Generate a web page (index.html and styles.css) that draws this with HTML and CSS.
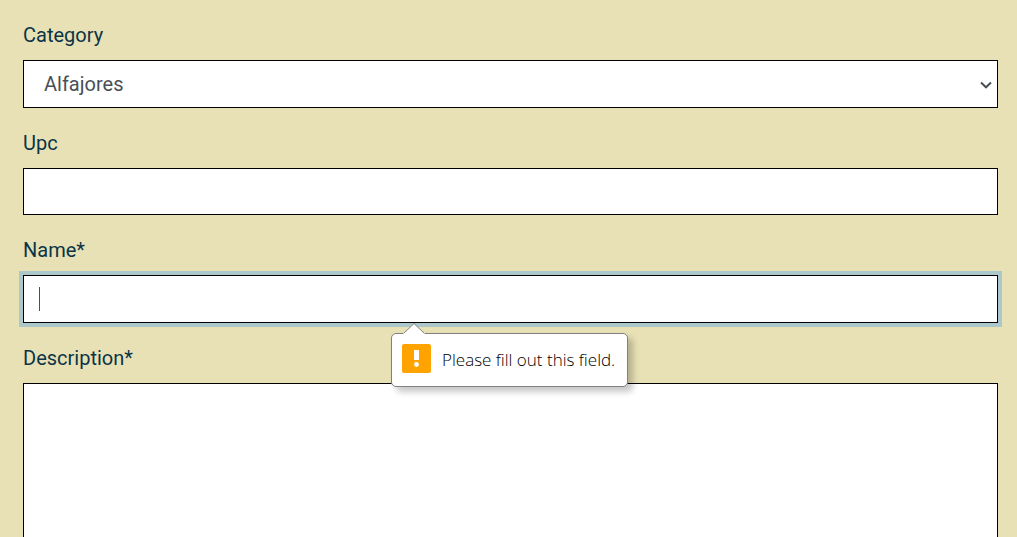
FILE: index.html
```html
<!DOCTYPE html>
<html lang="en">
<head>
<meta charset="utf-8">
<title>Product form</title>
<link rel="stylesheet" href="styles.css">
</head>
<body>
<form class="form" novalidate>
  <div class="field">
    <label class="label" for="category">Category</label>
    <div class="control-wrap">
      <select class="control select" id="category"><option>Alfajores</option></select>
      <svg class="chevron" viewBox="0 0 12 8" aria-hidden="true"><path d="M1 1.5 L6 6.3 L11 1.5"/></svg>
    </div>
  </div>
  <div class="field">
    <label class="label" for="upc">Upc</label>
    <input class="control" id="upc" type="text">
  </div>
  <div class="field">
    <label class="label" for="name">Name*</label>
    <div class="control-wrap">
      <input class="control is-active" id="name" type="text" required aria-describedby="name-hint">
      <span class="caret" aria-hidden="true"></span>
      <div class="bubble" id="name-hint" role="alert">
        <svg class="bubble-arrow" viewBox="0 0 22 11" aria-hidden="true"><path class="arrow-fill" d="M0 11 L1 10 L11 0.5 L21 10 L22 11 Z"/><path class="arrow-line" d="M1 10 L11 0.5 L21 10"/></svg>
        <svg class="bubble-icon" viewBox="0 0 29 29" aria-hidden="true"><rect width="29" height="29" rx="2" fill="#ffa300"/><path d="M12 6h5v10h-5z" fill="#fff"/><circle cx="14.5" cy="20.5" r="2.4" fill="#fff"/></svg>
        <span>Please fill out this field.</span>
      </div>
    </div>
  </div>
  <div class="field">
    <label class="label" for="description">Description*</label>
    <textarea class="control textarea" id="description" required></textarea>
  </div>
</form>
</body>
</html>
```
FILE: styles.css
```css
* {
  box-sizing: border-box;
}

body {
  margin: 0;
  background: #e8e1b6;
  color: #0b3447;
  font-family: Roboto, sans-serif;
  font-size: 20px;
  line-height: 30px;
  overflow: hidden;
}

.form {
  display: flex;
  flex-direction: column;
  gap: 20px;
  padding: 20px 19px 0 23px;
}

.field {
  display: flex;
  flex-direction: column;
  gap: 10px;
}

.control-wrap {
  position: relative;
  display: flex;
}

.control {
  width: 100%;
  height: 47px;
  padding: 8px 15px;
  border: 1px solid #000;
  border-radius: 0;
  outline: none;
  background: #fff;
  color: #495057;
  font: inherit;
}

.select {
  appearance: none;
  height: 48px;
  padding: 8px 20px;
}

.chevron {
  position: absolute;
  right: 6px;
  top: 21px;
  width: 12px;
  height: 8px;
  fill: none;
  stroke: #495057;
  stroke-width: 2;
  pointer-events: none;
}

.is-active {
  height: 48px;
  box-shadow: 0 0 0 4px #adc8ca;
}

.caret {
  position: absolute;
  left: 16px;
  top: 12px;
  width: 1px;
  height: 24px;
  background: #495057;
}

.textarea {
  display: block;
  height: 240px;
  resize: none;
}

.bubble {
  position: absolute;
  z-index: 1;
  left: 368px;
  top: 58px;
  display: flex;
  align-items: flex-start;
  gap: 11px;
  height: 54px;
  padding: 10px 12px 12px 10px;
  border: 1px solid #808080;
  border-radius: 5px;
  background: #fff;
  box-shadow: 5px 5px 6px rgba(0, 0, 0, 0.22);
  color: #000;
  font-family: "Open Sans", "Noto Sans", sans-serif;
  font-size: 17px;
  font-weight: 350;
  line-height: 32px;
  white-space: nowrap;
}

.bubble-arrow {
  position: absolute;
  left: 11px;
  top: -11px;
  width: 22px;
  height: 11px;
}

.arrow-fill {
  fill: #fff;
}

.arrow-line {
  fill: none;
  stroke: #808080;
}

.bubble-icon {
  width: 29px;
  height: 29px;
}
```
